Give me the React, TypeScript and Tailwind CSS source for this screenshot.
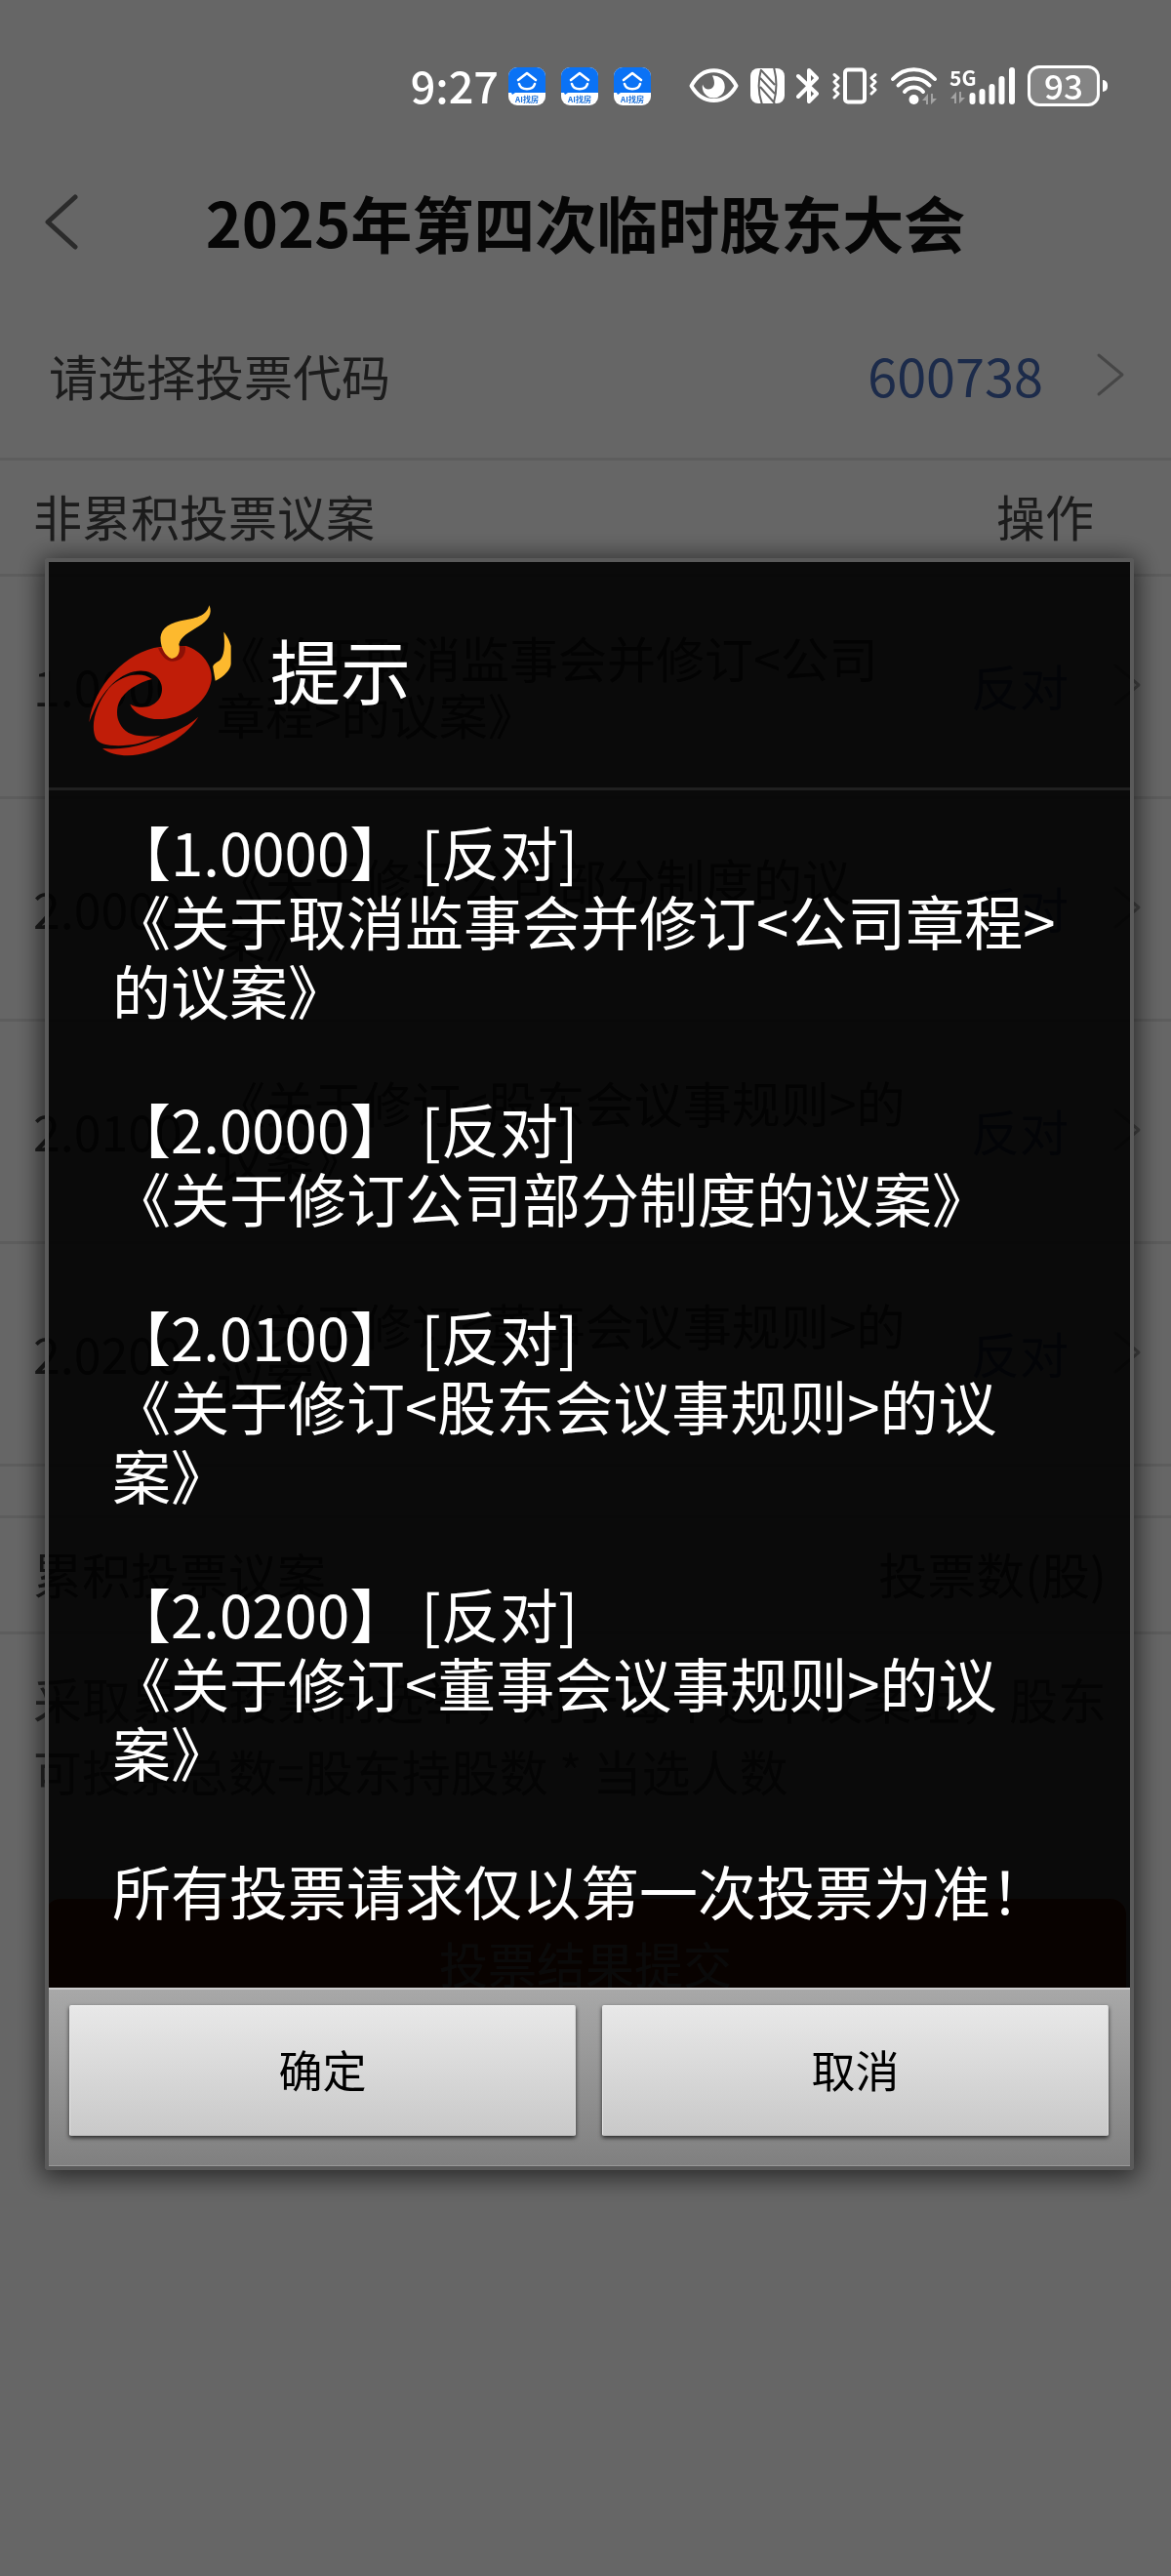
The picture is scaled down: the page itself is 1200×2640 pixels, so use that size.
type Proposal = {
  code: string
  lines: string[]
  vote: string
}

const proposals: Proposal[] = [
  { code: "1.0000", lines: ["《关于取消监事会并修订<公司", "章程>的议案》"], vote: "反对" },
  { code: "2.0000", lines: ["《关于修订公司部分制度的议", "案》"], vote: "反对" },
  { code: "2.0100", lines: ["《关于修订<股东会议事规则>的", "议案》"], vote: "反对" },
  { code: "2.0200", lines: ["《关于修订<董事会议事规则>的", "议案》"], vote: "反对" },
]

const message = [
  "【1.0000】 [反对]",
  "《关于取消监事会并修订<公司章程>",
  "的议案》",
  "",
  "【2.0000】 [反对]",
  "《关于修订公司部分制度的议案》",
  "",
  "【2.0100】 [反对]",
  "《关于修订<股东会议事规则>的议",
  "案》",
  "",
  "【2.0200】 [反对]",
  "《关于修订<董事会议事规则>的议",
  "案》",
  "",
  "所有投票请求仅以第一次投票为准！",
].join("\n")

function AppBadge() {
  return (
    <svg className="h-[39px] w-[38px]" viewBox="0 0 38 39">
      <rect width="38" height="39" rx="9" fill="#fff" />
      <path d="M0 26V9a9 9 0 0 1 9-9h20a9 9 0 0 1 9 9v17H7l-3 2-1-2Z" fill="#0a72f5" />
      <path d="m10 13 9-7 9 7" fill="none" stroke="#fff" strokeWidth="2.6" strokeLinecap="round" strokeLinejoin="round" />
      <path d="M11 17c2 7 14 7 16 0" fill="none" stroke="#fff" strokeWidth="2.6" strokeLinecap="round" />
      <text x="19" y="36" textAnchor="middle" fontSize="8" fontWeight="700" fill="#1a6fd8">AI找房</text>
    </svg>
  )
}

function StatusBar() {
  return (
    <div className="relative z-20 flex h-[176px] items-center justify-end pr-[65px] text-white">
      <span className="mr-[10px] pb-1 text-[45px] font-medium leading-none">9:27</span>
      <div className="mr-[39px] flex gap-4">
        <AppBadge />
        <AppBadge />
        <AppBadge />
      </div>
      {/* Eye comfort */}
      <svg className="mr-3 h-9 w-[51px]" viewBox="0 0 51 36">
        <path d="M2.5 18C14-3 37-3 48.500 18C37 38 14 38 2.500 18Z" fill="none" stroke="#fff" strokeWidth="4" strokeLinejoin="round" />
        <path d="M24 7.500a11.500 11.500 0 1 1-10 9c1 4 5 6 8.500 4.500s5-6 1.500-13.500Z" fill="#fff" />
      </svg>
      {/* NFC */}
      <svg className="mr-3 h-9 w-[35px]" viewBox="0 0 35 36">
        <rect width="35" height="36" rx="8" fill="#fff" />
        <path d="M12 37C8 26 8 12 11 1M11 2 25 17M10 10 25 26M10 19 25 36M24-1C27 10 27 24 24 35" fill="none" stroke="#666" strokeWidth="2" />
      </svg>
      {/* Bluetooth */}
      <svg className="mr-3 h-[38px] w-6" viewBox="0 0 24 38">
        <path d="M2 9 21 27 13 35V3l8 8L2 30" fill="none" stroke="#fff" strokeWidth="4" strokeLinejoin="round" strokeLinecap="round" />
      </svg>
      {/* Vibrate */}
      <svg className="mr-3 h-[38px] w-12" viewBox="0 0 48 38">
        <rect x="14" y="2.500" width="20" height="33" rx="3" fill="none" stroke="#fff" strokeWidth="4" />
        <path d="M3 7.500 7 11 3 15l4 4-4 4 4 4-4 4M45 7.500 41 11l4 4-4 4 4 4-4 4" fill="none" stroke="#fff" strokeWidth="3" strokeLinejoin="round" strokeLinecap="round" />
      </svg>
      {/* Wi-Fi */}
      <svg className="mr-3 h-[38px] w-[49px]" viewBox="0 0 49 38">
        <path d="M3 12C15-1 34-1 46 12M8.500 18.500C17 9 32 9 40.500 18.500M15 25c5-6 14-6 19 0" fill="none" stroke="#fff" strokeWidth="4" strokeLinecap="round" />
        <circle cx="24.500" cy="33" r="5" fill="#fff" />
        <path d="m33 34 6-7v11h-2v-4Zm15-2-6 6V27h2v5Z" fill="#a3a3a3" />
      </svg>
      {/* Cellular */}
      <div className="mr-3 flex h-[38px] w-[68px]">
        <div className="w-5">
          <span className="block w-7 text-[21px] leading-[20px] font-bold">5G</span>
          <svg className="mt-[2px] h-4 w-5" viewBox="0 0 20 16">
            <path d="m1 10 6-7v12H5v-5Zm15-1-6 6V3h2v6Z" fill="#a3a3a3" />
          </svg>
        </div>
        <svg className="h-[38px] w-12" viewBox="20 0 48 38">
          <path d="M23.500 29v6M33.500 25v10M43.500 20v15M53.500 12v23M64 3v32" stroke="#fff" strokeWidth="6" strokeLinecap="round" />
        </svg>
      </div>
      {/* Battery */}
      <div className="flex h-[42px] w-[74px] items-center justify-center rounded-xl border-[3px] border-white bg-white/20 pb-1 text-[35px] font-medium leading-none">
        93
      </div>
      <div className="ml-[3px] h-3 w-[5px] rounded-r-full bg-white" />
    </div>
  )
}

function Arrow() {
  return (
    <svg className="h-12 w-8 shrink-0" viewBox="0 0 32 48">
      <path d="M4 4 28 24 4 44" fill="none" stroke="#b0b0b0" strokeWidth="3" strokeLinecap="round" strokeLinejoin="round" />
    </svg>
  )
}

function BullLogo() {
  return (
    <svg className="h-40 w-[150px] shrink-0" viewBox="60 50 450 480">
      <g fill="#c01d08">
        <path d="M64 420C76 310 180 200 282 188L362 185C410 200 445 245 440 290C430 350 370 405 290 410C240 413 200 392 190 364C225 382 264 374 281 345C298 315 285 275 240 263C180 252 108 300 64 420Z" />
        <path d="M257 287C225 262 165 272 125 315C85 365 66 430 85 470C98 496 170 495 215 485C240 478 260 470 285 460C240 466 205 462 185 452C150 430 143 390 156 358C172 322 215 298 257 287Z" />
        <path d="M400 403C360 440 300 458 262 474C220 495 160 505 105 500C130 520 175 526 215 519C290 505 365 460 400 403Z" />
      </g>
      <path d="M276 192C290 222 305 234 322 232C348 230 362 212 360 187L340 184Z" fill="#8c1006" />
      <g fill="#fdb92e">
        <path d="M433 60C425 95 390 100 345 108C300 118 280 140 284 170C286 190 295 215 318 224C340 222 345 200 340 180C345 155 370 145 400 125C430 108 445 85 433 60Z" />
        <path d="M478 142C482 185 480 215 465 230C450 238 443 245 445 252L452 292C480 280 500 255 500 240L500 185C495 165 485 150 478 142Z" />
      </g>
    </svg>
  )
}

function VotePage() {
  return (
    <main className="text-[50px] leading-[58px] text-[#464646]">
      <header className="flex h-[126px] items-center px-[26px] pb-[22px]">
        <button type="button" aria-label="返回" className="w-20">
          <svg className="h-[60px] w-20" viewBox="0 0 80 60">
            <path d="M51 4 23 29.500 51 55" fill="none" stroke="#6b6b6b" strokeWidth="5" strokeLinecap="round" strokeLinejoin="round" />
          </svg>
        </button>
        <h1 className="flex-1 pb-1 text-center text-[63px] font-bold leading-none text-[#0f0f0f]">2025年第四次临时股东大会</h1>
        <div className="w-20" />
      </header>

      <button type="button" className="flex h-[170px] w-full items-center border-b-[3px] border-[#e8e8e8] pr-[46px] pb-1 pl-[50px]">
        <span className="flex-1 text-left">请选择投票代码</span>
        <span className="mr-[53px] text-[54px] text-[#486bb9]">600738</span>
        <Arrow />
      </button>

      <table className="w-full border-separate border-spacing-0 text-left">
        <thead>
          <tr>
            <th colSpan={2} className="h-[119px] border-b-[3px] border-[#e8e8e8] pt-0 pb-1 pl-[34px] font-normal">非累积投票议案</th>
            <th className="border-b-[3px] border-[#e8e8e8] pt-0 pr-[79px] pb-1 text-right font-normal">操作</th>
          </tr>
        </thead>
        <tbody>
          {proposals.map((item) => (
            <tr key={item.code}>
              <td className="h-[228px] w-[222px] border-b-[3px] border-[#e8e8e8] pt-0 pb-1 pl-[34px]">{item.code}</td>
              <td className="whitespace-pre border-b-[3px] border-[#e8e8e8] pt-0 pb-1">{item.lines.join("\n")}</td>
              <td className="border-b-[3px] border-[#e8e8e8] pt-0 pr-[29px] pb-1">
                <button type="button" className="ml-auto flex items-center gap-11 text-[#486bb9]">
                  {item.vote}
                  <Arrow />
                </button>
              </td>
            </tr>
          ))}
        </tbody>
      </table>

      <div className="mt-[50px] flex h-[122px] items-center justify-between border-y-[3px] border-[#e8e8e8] pr-[66px] pb-1 pl-[34px]">
        <h2>累积投票议案</h2>
        <span>投票数(股)</span>
      </div>
      <p className="whitespace-pre pl-[34px] pt-7 leading-[74px] text-[#606060]">
        {"采取累积投票制选举，对于每个选举议案组，股东\n可投票总数=股东持股数 * 当选人数"}
      </p>
      <div className="px-[46px] pt-[95px]">
        <button type="button" className="h-[134px] w-full rounded-2xl bg-[#cc3300] pb-1 text-white">投票结果提交</button>
      </div>
    </main>
  )
}

function DialogButton({ label }: { label: string }) {
  return (
    <button
      type="button"
      className="h-[134px] flex-1 rounded-xs border border-t-[#f5f5f5] border-r-[#d8d8d8] border-b-[#b5b5b5] border-l-[#e8e8e8] bg-linear-to-b from-[#e8e8e8] to-[#c9c9c9] pb-1 text-[45px] leading-none text-black shadow-[0_2px_4px_rgba(0,0,0,0.7)]"
    >
      {label}
    </button>
  )
}

function ConfirmDialog() {
  return (
    <div className="fixed inset-0 z-10 flex items-center bg-black/60 pt-[156px] pr-[38px] pl-[46px]">
      <div role="dialog" aria-labelledby="dialog-title" className="w-full rounded-sm border-4 border-[#5a5a5a] shadow-[0_4px_26px_4px_rgba(0,0,0,0.6)]">
        <div className="bg-black/90">
          <div className="flex h-[231px] gap-[37px] pt-[41px] pl-10">
            <BullLogo />
            <h2 id="dialog-title" className="text-[72px] leading-[136px] text-white">提示</h2>
          </div>
          <div className="h-[3px] bg-[#202020]" />
          <p className="whitespace-pre px-[65px] pt-[26px] pb-[65px] text-[60px] leading-[71px] text-white">{message}</p>
        </div>
        <div className="flex gap-[27px] border-t-2 border-b border-t-[#cccccc] border-b-[#999999] bg-linear-to-b from-[#a8a8a8] to-[#808080] pt-4 pr-[22px] pb-[30px] pl-[21px]">
          <DialogButton label="确定" />
          <DialogButton label="取消" />
        </div>
      </div>
    </div>
  )
}

export default function App() {
  return (
    <div className="min-h-screen bg-white font-['Noto_Sans_CJK_SC',sans-serif]">
      <StatusBar />
      <VotePage />
      <ConfirmDialog />
    </div>
  )
}
